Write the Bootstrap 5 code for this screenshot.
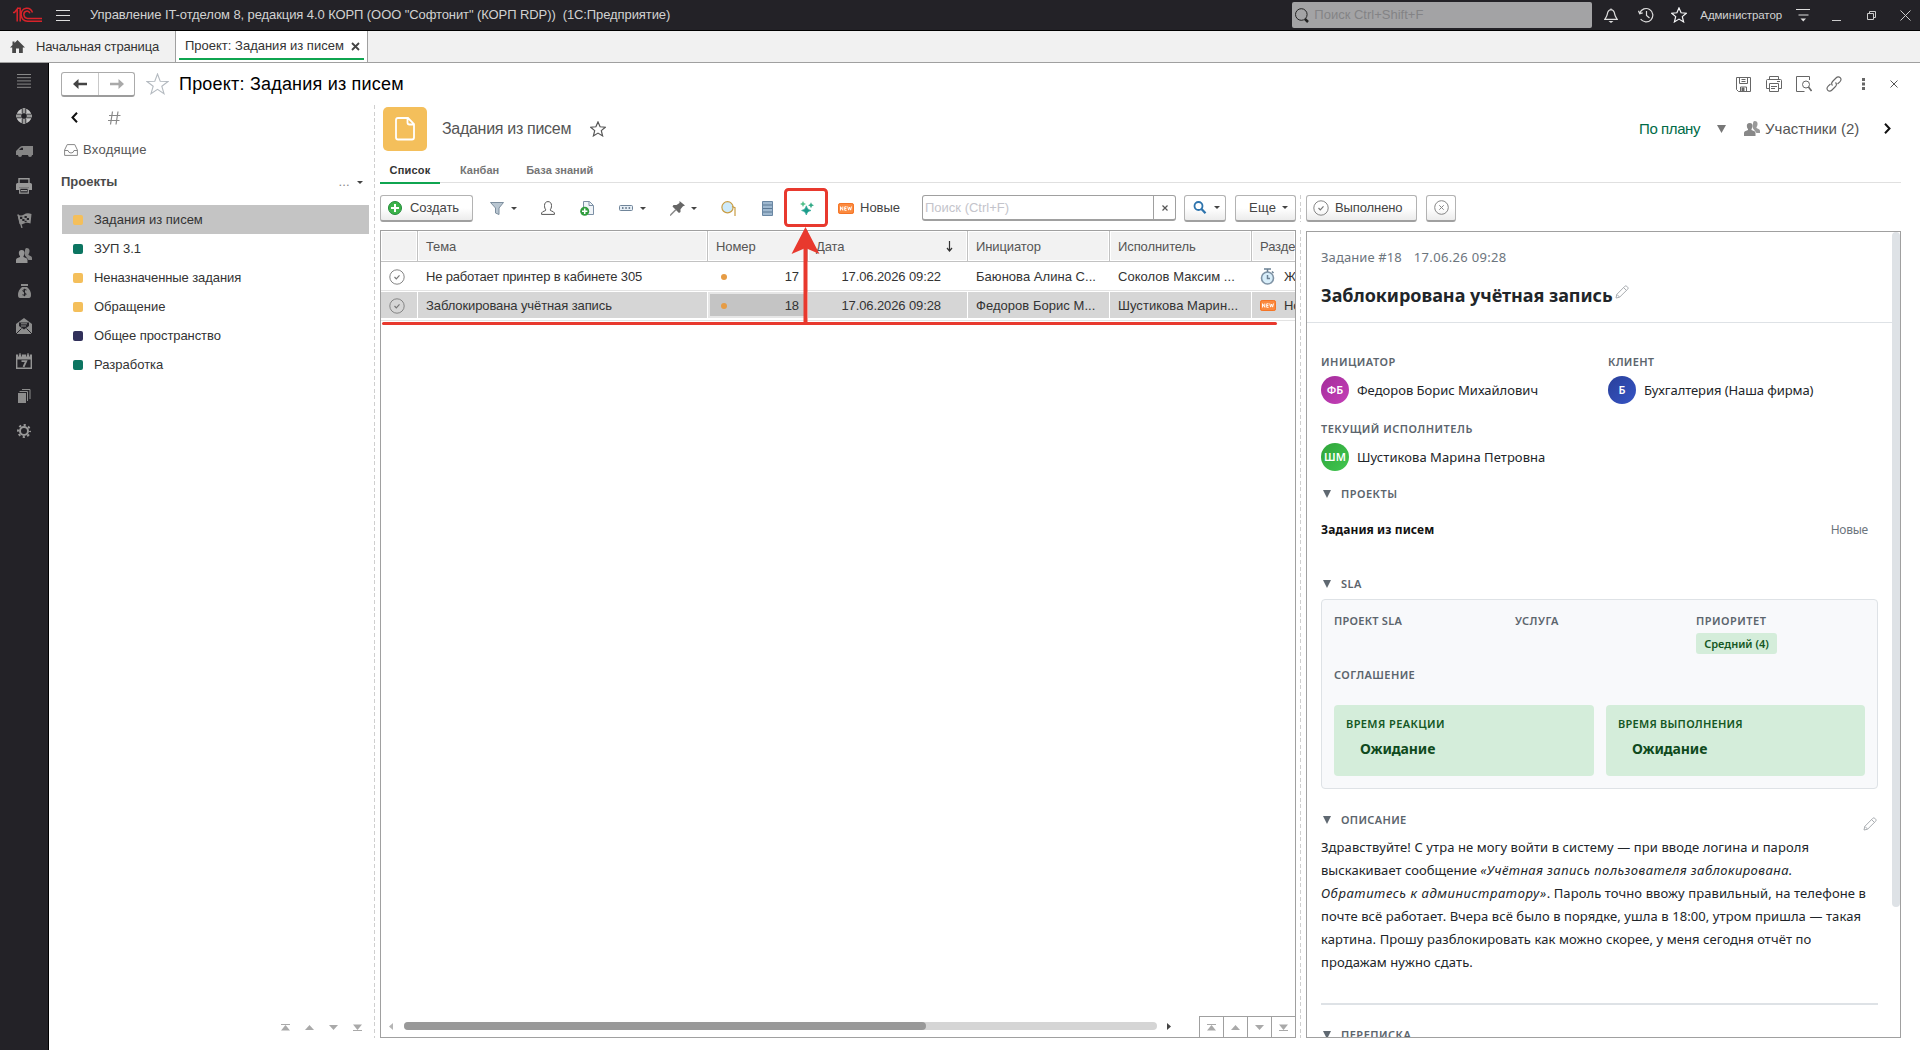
<!DOCTYPE html>
<html lang="ru">
<head>
<meta charset="utf-8">
<title>Проект: Задания из писем</title>
<link href="https://cdn.jsdelivr.net/npm/bootstrap@5.3.0/dist/css/bootstrap.min.css" rel="stylesheet">
<style>
*{box-sizing:border-box}
body{font-family:"Liberation Sans",Arial,sans-serif;font-size:13px;line-height:16px;color:#333;background:#fff;width:1920px;height:1050px;overflow:hidden;white-space:nowrap}
svg{display:block;flex:none}
.topbar{height:31px;background:#232227;border-bottom:1px solid #000;color:#d2d2d2;padding-left:12px}
.apptitle{margin-left:19px;letter-spacing:-.09px;white-space:pre}
.gsearch{width:300px;height:26px;background:#a3a3a5;border-radius:2px;color:#838386;padding-left:3px}
.tabsbar{height:32px;background:#f1f1f1;border-bottom:1px solid #a0a0a0}
.hometab{width:175px;padding-left:10px;letter-spacing:-.15px}
.wintab{width:193px;border:solid #a0a0a0;border-width:0 1px;background:#fff;padding:0 3px;height:31px}
.wintab>div{border-bottom:2px solid #0fa550;height:29px;padding:3px 4px 0 6px}
.side{width:49px;background:#232227;border-right:1px solid #000;color:#949494}
.side>div{height:35px}
.titlerow{height:42px;padding-left:12px}
.navgrp{width:74px;height:25px;border:1px solid #ababab;border-bottom:2px solid #9c9c9c;border-radius:3px}
.navgrp>div{width:36px}
.navgrp>div+div{border-left:1px solid #c9c9c9}
.wtitle{font-size:18px;letter-spacing:.2px;color:#000;margin-left:10px}
.tree{width:325px;padding-left:12px}
.trow{height:29px;width:307px;padding-left:11px;margin-left:1px}
.trow i{width:10px;height:10px;border-radius:2px;margin-right:11px}
.vdash{width:1px;background:repeating-linear-gradient(#cfcfcf 0 4px,transparent 4px 6.6px)}
.prjico{width:44px;height:44px;border-radius:5px;background:#f4bf5b}
.vtabs{height:26px;border-bottom:1px solid #e0e0e0;font-weight:bold;font-size:11px;color:#757575;width:1521px}
.vtabs>div{height:26px;padding-top:4px}
.vtabs .on{width:60px;border-bottom:2px solid #0fa550;color:#333;margin-right:20px}
.btn1{height:27px;border:1px solid #b3b3b3;border-bottom:2px solid #a0a0a0;border-radius:3px;background:linear-gradient(#fff 50%,#ececec);color:#444}
.caret{width:0;height:0;border:solid transparent;border-width:3px 3px 0;border-top-color:#444}
.sbox{width:254px;height:26px;border:1px solid #a0a0a0;border-bottom-width:2px;border-radius:3px;color:#c4c4cb}
.sbox>div+div{border-left:1px solid #a0a0a0;width:22px;height:23px;color:#555}
.grid1{width:916px;height:808px;border:1px solid #a0a0a0}
.gr{display:grid;grid-template-columns:37px 290px 100px 160px 142px 142px 1fr;height:29px;border-bottom:1px solid #e3e3e3;letter-spacing:-.1px;align-items:stretch}
.gr>div{display:flex;align-items:center;padding:1px 0 0 8px;border-right:1px solid transparent;overflow:hidden}
.gr.hd{height:31px;border-bottom:1px solid #c2c2c2;color:#555}
.gr.hd>div{border-right-color:#c2c2c2;background:#f2f2f2;box-shadow:inset 0 0 0 1px #fff}
.gr>div:last-child{border-right:0}
.gr.sel{height:30px;padding:1px 0 2px}
.gr.sel>div{background:#d6d6d6;border-right-color:#fff}
.gr>.cur1{background:#c4c4c4!important;box-shadow:inset 0 0 0 2px #e6e6e6}
.gr>.pers{letter-spacing:.04px}
.dot1{width:6px;height:6px;border-radius:50%;background:#e69c45;margin-left:5px}
.hthumb{background:#d5d5d5;width:753px;height:8px;border-radius:4px}
.hthumb:before{content:"";display:block;width:522px;height:8px;border-radius:4px;background:#999}
.scell{width:24px;height:21px;border:solid #a0a0a0;border-width:1px 0 0 1px}
.pane{width:595px;height:807px;border:1px solid #a0a0a0;font-family:"Noto Sans",sans-serif;color:#212529;overflow:hidden}
.pbody{width:585px}
.vthumb{width:8px;height:675px;background:#dee2e6;border-radius:4px}
.meta1{color:#6c757d;padding:17px 0 0 14px;height:38px;letter-spacing:.1px}
.h1x{font-weight:bold;font-size:18px;letter-spacing:-.04px;line-height:24px}
.lbl{font-weight:600;font-size:11px;color:#5c656d;letter-spacing:.48px;line-height:16px}
.ava{width:28px;height:28px;border-radius:50%;color:#fff;font-weight:600;font-size:11px;margin-right:8px}
.tri{width:0;height:0;border:solid transparent;border-width:8px 4.5px 0;border-top-color:#5f6871;margin:0 10px 0 2px}
.slabox{height:190px;width:557px;border:1px solid #dee2e6;border-radius:4px;background:#f8f9fb;padding:13px 12px 0}
.pri{background:#d4edda;color:#155724;font-weight:600;font-size:11px;border-radius:3px;height:21px;width:81px}
.gbox{background:#d4edda;color:#0f4a1d;border-radius:4px;height:71px;padding:11px 12px 0}
.gbox .lbl{color:#155724}
.gbox b{font-size:14px;margin:8px 0 0 14px;line-height:18px;letter-spacing:-.14px}
.desc1{line-height:23px;height:138px;letter-spacing:.09px}
.redlayer{left:380px;top:186px;z-index:5;pointer-events:none}
</style>
<script src="https://cdn.jsdelivr.net/npm/bootstrap@5.3.0/dist/js/bootstrap.bundle.min.js"></script>
</head>
<body>
<svg width="0" height="0" class="position-absolute">
<defs>
<symbol id="chk" viewBox="0 0 16 16"><circle cx="8" cy="8" r="7.2" fill="none" stroke="#858585"/><path d="M5.500 8l1.800 1.800 3.200-3.400" fill="none" stroke="#777" stroke-width="1.200"/></symbol>
<symbol id="star" viewBox="0 0 16 16"><path d="M8 .9l2.100 4.900 5.200.4-4 3.400 1.300 5.300L8 12.100l-4.600 2.800 1.300-5.300-4-3.400 5.200-.4z" fill="none" stroke="currentColor" stroke-width="1.200"/></symbol>
<symbol id="newb" viewBox="0 0 16 11"><rect width="16" height="11" rx="2.500" fill="#fb8a3f"/><rect x=".5" y=".5" width="15" height="10" rx="2" fill="none" stroke="#f47426"/><path d="M2.500 7.500V3.700l2.300 3.600V3.500M8.600 3.800H6.700v3.500h1.900M6.700 5.500h1.700M9.700 3.500l.9 3.600 1-3 1 3 .9-3.600" fill="none" stroke="#fff" stroke-width=".95"/></symbol>
<symbol id="pen" viewBox="0 0 14 14"><path d="M1 13l.8-3.600L9.800 1.300q1-1 2 0l.9.9q1 1 0 2L4.600 12.200zM8.600 2.600l2.900 2.900M2 9.500l2.500 2.500" fill="none" stroke="#a9adb1"/></symbol>
<symbol id="up" viewBox="0 0 9 7"><path d="M4.500 1L9 6H0z" fill="#a9a9a9"/></symbol>
<symbol id="dn" viewBox="0 0 9 7"><path d="M4.500 6L0 1h9z" fill="#a9a9a9"/></symbol>
<symbol id="top" viewBox="0 0 9 7"><path d="M4.500 1L9 6.500H0zM0 0h9v1H0z" fill="#a9a9a9"/></symbol>
<symbol id="bot" viewBox="0 0 9 7"><path d="M4.500 6L0 .5h9zM0 6h9v1H0z" fill="#a9a9a9"/></symbol>
<symbol id="folk" viewBox="0 0 16 15"><path d="M10.500 0C13 0 13.800 1.500 13.500 3.500c-.2 1.500-.7 2.200-1 2.600v1L15 8.300q1 .5 1 1.700v2h-3.500L9 7.500V2q.3-1.800 1.500-2z" fill="currentColor" opacity=".85"/><path d="M5.700 2c2.300 0 3.200 1.500 2.900 3.500-.2 1.300-.6 1.900-1.100 2.400v1.200l3 1.200q1 .5 1 1.700v3H0v-3q0-1.200 1-1.700l3-1.200V7.900C3.400 7.400 3 6.800 2.900 5.500 2.600 3.500 3.500 2 5.700 2z" fill="currentColor"/></symbol>
</defs>
</svg>

<header class="topbar d-flex align-items-center">
<svg width="31" height="16" viewBox="0 0 31 16" fill="none" stroke="#d8232a" stroke-width="1.500"><path d="M1 5.500h1.500L5.200 2v12.500M8.200 14.500V1.200H5.500"/><path d="M20.500 5.500C19.500 2.500 17 .9 14.300 1.200 11 1.500 8.700 4.500 9.200 8.200c.4 3.600 3 6 6.300 6H30M18 6.200c-.7-1.500-2.200-2.400-3.700-2C12.400 4.700 11.600 6.500 12 8.400c.4 2 1.800 3 3.500 3H30" /></svg>
<svg style="margin-left:13px" width="15" height="13" viewBox="0 0 15 13"><path d="M0 1.500h14M0 6.500h14M0 11.500h14" stroke="#ddd" fill="none"/></svg>
<span class="apptitle">Управление IT-отделом 8, редакция 4.0 КОРП (ООО "Софтонит" (КОРП RDP))  (1С:Предприятие)</span>
<div class="gsearch d-flex align-items-center ms-auto">
<svg width="15" height="17" viewBox="0 0 15 17" fill="none" stroke="#222"><circle cx="6.300" cy="7.500" r="5.800"/><path d="M10 12l3 3" stroke-width="2.500"/></svg>
<span style="margin-left:4px">Поиск Ctrl+Shift+F</span></div>
<svg style="margin-left:12px" width="14" height="16" viewBox="0 0 14 16"><path d="M7 1.500v1.200C4 3 3.600 5 3.300 7.200 3 9.500 2 10.500.8 12.300h12.400C12 10.500 11 9.500 10.700 7.200 10.400 5 10 3 7 2.700" fill="none" stroke="#ddd" stroke-width="1.200"/><path d="M4.500 14h5L7 16z" fill="#ddd"/></svg>
<svg style="margin-left:20px" width="16" height="16" viewBox="0 0 16 16" fill="none" stroke="#ddd" stroke-width="1.200"><path d="M1.800 6A6.700 6.700 0 1 1 2.600 12M.5 3.800l1.200 2.900 3-.8M8.500 4v4.500l3 2.500"/></svg>
<svg class="text-light" style="margin-left:17px" width="16" height="16"><use href="#star"/></svg>
<span style="margin:0 14px 0 13px;font-size:11.500px;letter-spacing:-.1px">Администратор</span>
<svg width="15" height="14" viewBox="0 0 15 14"><path d="M0 1.500h14M2.500 7h10" stroke="#ddd"/><path d="M4.500 10.500h5.500L7.300 13.500z" fill="#ddd"/></svg>
<svg style="margin-left:21px" width="10" height="14"><path d="M0 12.500h9" stroke="#ccc"/></svg>
<svg style="margin-left:25px" width="11" height="11" viewBox="0 0 11 11" fill="none" stroke="#ccc"><path d="M.5 3.500h6v6h-6zM2.500 3V1.500h6v6H7"/></svg>
<svg style="margin:0 9px 0 22px" width="11" height="11" viewBox="0 0 11 11"><path d="M.5.5l10 10M10.500.5l-10 10" stroke="#ccc"/></svg>
</header>

<nav class="tabsbar d-flex">
<div class="hometab d-flex align-items-center"><svg width="15" height="13" viewBox="0 0 15 13"><path d="M7.500 0L15 7.500h-2.200V13H9V8.500H6V13H2.200V7.500H0L2.500 5V1.500h2v1.600z" fill="#484848"/></svg><span style="margin-left:11px">Начальная страница</span></div>
<div class="wintab"><div class="d-flex align-items-center justify-content-between">Проект: Задания из писем<svg width="9" height="9" viewBox="0 0 9 9"><path d="M1 1l7 7M8 1L1 8" stroke="#444" stroke-width="1.800"/></svg></div></div>
</nav>

<div class="d-flex" style="height:987px">
<aside class="side d-flex flex-column">
<div class="d-flex align-items-center justify-content-center"><svg width="14" height="14"><path d="M0 .5h14M0 3.700h14M0 6.900h14M0 10.100h14M0 13.300h14" stroke="#888"/></svg></div>
<div class="d-flex align-items-center justify-content-center"><svg width="16" height="16" viewBox="0 0 16 16"><circle cx="8" cy="8" r="5.300" fill="none" stroke="#c4c4c4" stroke-width="4.600"/><path d="M8 0v5.200M8 10.800V16M0 8h5.200M10.800 8H16" stroke="#232227" stroke-width="4.500"/><path d="M8 0v5.200M8 10.800V16M0 8h5.200M10.800 8H16" stroke="#999" stroke-width="2.800"/></svg></div>
<div class="d-flex align-items-center justify-content-center"><svg width="17" height="12" viewBox="0 0 17 12"><path d="M0 10V6l4-4q1-1 2.500-1H17v9h-1a2 2 0 0 1-4 0H6a2 2 0 0 1-4 0z" fill="#858585"/><path d="M3 5l2.300-2.300H7V5z" fill="#232227"/></svg></div>
<div class="d-flex align-items-center justify-content-center"><svg width="16" height="16" viewBox="0 0 16 16"><path d="M3 5V.7h10V5" fill="none" stroke="#999" stroke-width="1.400"/><path d="M1.500 5h13Q16 5 16 6.500V12h-3V9.500H3V12H0V6.500Q0 5 1.500 5z" fill="#999"/><path d="M3.700 10.200h8.600v5H3.700zM5 12.700h6" fill="none" stroke="#999" stroke-width="1.300"/></svg></div>
<div class="d-flex align-items-center justify-content-center"><svg width="15" height="15" viewBox="0 0 15 15"><path d="M.5 1.500Q4 3.500 7 1.500T14.500 1l-1 9.500Q10 9 7 10.500T2.500 11z" fill="#8c8c8c"/><path d="M1 1.500l4 13.500" stroke="#8c8c8c" stroke-width="1.300"/><path d="M3 3.800h2.300V6H3zM7.500 3h2.300v2H7.500zM5.300 6h2.200v2H5.300zM9.800 5h2.200v2H9.800zM7.600 7.700h2v1.600h-2z" fill="#232227"/></svg></div>
<div class="d-flex align-items-center justify-content-center"><svg width="16" height="15"><use href="#folk"/></svg></div>
<div class="d-flex align-items-center justify-content-center"><svg width="13" height="14" viewBox="0 0 13 14"><path d="M3 0h7v2H3zM4 3h5q4 3 4 8 0 3-2 3H2q-2 0-2-3 0-5 4-8z" fill="#8c8c8c"/><path d="M8.500 6q-2-1-3.300 0T6.500 8.500t1.300 2.300-3.300 0M6.500 4.800v7.400" fill="none" stroke="#232227"/></svg></div>
<div class="d-flex align-items-center justify-content-center"><svg width="16" height="16" viewBox="0 0 16 16"><path d="M0 6l8-6 8 6v10H0z" fill="#8c8c8c"/><path d="M3 4.500h10V8l-5 3.500L3 8z" fill="#232227"/><path d="M0 16l5.500-5.500M16 16l-5.500-5.500" stroke="#232227"/><path d="M5 5.800h6M5 8h5" stroke="#8c8c8c"/></svg></div>
<div class="d-flex align-items-center justify-content-center"><svg width="16" height="16" viewBox="0 0 16 16"><path d="M.7 3h14.600v12.300H.7z" fill="none" stroke="#949494" stroke-width="1.400"/><path d="M0 2h16v4H0zM4 0v4M12 0v4" fill="#949494" stroke="#949494"/><path d="M2.500 0v3.500M5.500 0v3.500M10.500 0v3.500M13.500 0v3.500" stroke="#232227" stroke-width=".8"/><path d="M5.500 8.200h4.700L7.500 14" fill="none" stroke="#949494" stroke-width="1.800"/></svg></div>
<div class="d-flex align-items-center justify-content-center"><svg width="13" height="14" viewBox="0 0 13 14"><path d="M0 4h8v10H0z" fill="#8c8c8c"/><path d="M1.500 2.500h8V12M4 .5h8v9.500" fill="none" stroke="#8c8c8c"/></svg></div>
<div class="d-flex align-items-center justify-content-center"><svg width="14" height="14" viewBox="0 0 14 14"><circle cx="7" cy="7" r="4" fill="none" stroke="#999" stroke-width="2"/><circle cx="7" cy="7" r="6" fill="none" stroke="#999" stroke-width="2" stroke-dasharray="2.200 2.512" stroke-dashoffset="1.100"/></svg></div>
</aside>

<main class="flex-grow-1">
<div class="titlerow d-flex align-items-center">
<div class="navgrp d-flex">
<div class="d-flex align-items-center justify-content-center"><svg width="14" height="10" viewBox="0 0 14 10"><path d="M0 5L5.500 0v3.700H14v2.600H5.500V10z" fill="#444"/></svg></div>
<div class="d-flex align-items-center justify-content-center"><svg width="14" height="10" viewBox="0 0 14 10"><path d="M14 5L8.500 0v3.700H0v2.600h8.500V10z" fill="#a9a9a9"/></svg></div></div>
<svg style="margin-left:11px;color:#b4bac0" width="23" height="22" viewBox="0 0 23 22"><path d="M11.500 1l2.700 7.300 7.800.2-6.200 4.700 2.200 7.500-6.500-4.400L5 20.700l2.200-7.500L1 8.500l7.800-.2z" fill="none" stroke="currentColor" stroke-width="1.100"/></svg>
<span class="wtitle">Проект: Задания из писем</span>
<div class="d-flex align-items-center ms-auto" style="margin-right:22px">
<svg width="15" height="15" viewBox="0 0 15 15" fill="none" stroke="#666"><path d="M.5.5h14v14h-12l-2-2zM3.500.5v6h8v-6M5.500 2.500h4M5.500 4.500h4M4.500 14v-4h6v4"/><path d="M6 11h2v3H6z" fill="#666"/></svg>
<svg style="margin-left:15px" width="16" height="16" viewBox="0 0 16 16" fill="none" stroke="#666"><path d="M3.500 3.500v-3h9v3M3 12.500H.5v-8q0-1 1-1h13q1 0 1 1v8H13M3.500 7.500h9v8h-9zM5 10.500h6M5 12.500h4M11 5.500h3"/></svg>
<svg style="margin-left:14px" width="16" height="16" viewBox="0 0 16 16" fill="none" stroke="#666"><path d="M13.500 4V.5H.5v15h8"/><circle cx="10" cy="8.500" r="3.500"/><path d="M12.500 11l3 4" stroke-width="1.600"/></svg>
<svg style="margin-left:14px" width="16" height="16" viewBox="0 0 16 16" fill="none" stroke="#666" stroke-width="1.100"><path d="M6.500 9.500C5 8 5.500 6.500 7 5l3-3c1.500-1.500 3-1.500 4.200-.3s1 2.700-.4 4.200L11.500 8M9.500 6.500C11 8 10.500 9.500 9 11l-3 3c-1.500 1.500-3 1.500-4.200.3s-1-2.700.4-4.200L4.500 8"/></svg>
<svg style="margin-left:20px" width="3" height="12"><path d="M0 0h3v3H0zM0 4.500h3v3H0zM0 9h3v3H0z" fill="#666"/></svg>
<svg style="margin-left:25px" width="8" height="8" viewBox="0 0 8 8"><path d="M.5.500l7 7M7.500.500l-7 7" stroke="#555"/></svg>
</div></div>

<div class="d-flex" style="height:933px">
<section class="tree d-flex flex-column">
<div class="d-flex align-items-center" style="height:25px;padding-left:10px"><svg width="7" height="11" viewBox="0 0 7 11"><path d="M6 .8L1.500 5.500 6 10.200" fill="none" stroke="#111" stroke-width="2"/></svg><svg style="margin-left:30px" width="13" height="14" viewBox="0 0 13 14"><path d="M4.500.5L2.500 13.500M10 .5L8 13.500M1 4.500h11.500M0 9.500h11.500" stroke="#888" stroke-width="1.200" fill="none"/></svg></div>
<div class="d-flex align-items-center" style="height:40px;padding-left:3px;letter-spacing:.27px;color:#555"><svg width="14" height="12" viewBox="0 0 14 12"><path d="M.6 6L3.200.6h7.600L13.400 6v5.400H.6zM.6 6.500H4q.5 2.500 3 2.500t3-2.500h3.400" fill="none" stroke="#888"/></svg><span style="margin-left:5px">Входящие</span></div>
<div class="d-flex align-items-center" style="height:24px;color:#4a4a4a"><b>Проекты</b><span style="margin-left:221px;color:#888;letter-spacing:.2px">...</span><i class="caret" style="margin-left:7px"></i></div>
<div style="height:11px"></div>
<div class="trow d-flex align-items-center" style="background:#c4c4c4"><i style="background:#f4bf5b"></i>Задания из писем</div>
<div class="trow d-flex align-items-center"><i style="background:#0c7561"></i>ЗУП 3.1</div>
<div class="trow d-flex align-items-center"><i style="background:#f4bf5b"></i><span style="letter-spacing:-.09px">Неназначенные задания</span></div>
<div class="trow d-flex align-items-center"><i style="background:#f4bf5b"></i>Обращение</div>
<div class="trow d-flex align-items-center"><i style="background:#31305a"></i><span style="letter-spacing:-.08px">Общее пространство</span></div>
<div class="trow d-flex align-items-center"><i style="background:#0c7561"></i>Разработка</div>
<div class="d-flex mt-auto" style="gap:15px;padding:0 0 7px 220px"><svg width="9" height="7"><use href="#top"/></svg><svg width="9" height="7"><use href="#up"/></svg><svg width="9" height="7"><use href="#dn"/></svg><svg width="9" height="7"><use href="#bot"/></svg></div>
</section>
<div class="vdash"></div>

<section style="padding-left:5px">
<div class="d-flex align-items-center" style="height:47px;padding-left:3px;color:#555">
<div class="prjico d-flex align-items-center justify-content-center"><svg width="20" height="24" viewBox="0 0 20 24" fill="none" stroke="#fff" stroke-width="1.800"><path d="M3.500 1h9.500l6 6v13.500q0 2-2 2H3q-2 0-2-2V3q0-2 2-2zM12.500 1.500V5.500q0 2 2 2h4"/></svg></div>
<span style="font-size:16px;letter-spacing:-.3px;margin-left:15px">Задания из писем</span>
<svg style="margin-left:19px" width="16" height="16"><use href="#star"/></svg>
<div class="d-flex align-items-center ms-auto" style="font-size:15px;width:262px">
<span style="color:#006b47;letter-spacing:-.4px">По плану</span>
<svg style="margin-left:17px" width="9" height="8"><path d="M0 0h9L4.500 8z" fill="#777"/></svg>
<svg style="margin-left:18px;color:#888" width="16" height="15"><use href="#folk"/></svg>
<span style="margin-left:5px">Участники (2)</span>
<svg style="margin-left:25px" width="7" height="11" viewBox="0 0 7 11"><path d="M1 .8l4.500 4.700L1 10.200" fill="none" stroke="#111" stroke-width="2"/></svg></div></div>
<div style="height:6px"></div>
<div class="vtabs d-flex" style="height:25px"><div class="on text-center" style="letter-spacing:.2px">Список</div><div style="margin-right:27px">Канбан</div><div>База знаний</div></div>

<div class="d-flex align-items-center" style="height:47px;padding-top:3px">
<div class="btn1 d-flex align-items-center" style="width:93px;padding-left:7px"><svg width="14" height="14" viewBox="0 0 14 14"><circle cx="7" cy="7" r="6.500" fill="#3cb34a" stroke="#23893a"/><path d="M7 3v8M3 7h8" stroke="#fff" stroke-width="2"/></svg><span style="margin-left:8px;letter-spacing:-.06px">Создать</span></div>
<svg style="margin-left:17px" width="14" height="13" viewBox="0 0 14 13"><path d="M.5.500h13L9 6v6.500l-3.500-1.500V6z" fill="#b9c6d1" stroke="#7d8e9e"/></svg><i class="caret" style="margin-left:7px"></i>
<svg style="margin-left:24px" width="14" height="14" viewBox="0 0 14 14"><path d="M.6 13.400v-1.500C1.500 10 5 10 5 9 4 8 3.500 6.500 3.500 4.500 3.500 2 5 .6 7 .6s3.500 1.400 3.500 3.900C10.500 6.500 10 8 9 9c0 1 3.500 1 4.400 2.900v1.500z" fill="none" stroke="#555"/></svg>
<svg style="margin-left:25px" width="14" height="15" viewBox="0 0 14 15"><path d="M3.500 8V.5h6l4 4v9H8" fill="#f0f4f8" stroke="#7c90a5"/><path d="M9 .5v4h4" fill="none" stroke="#7c90a5"/><circle cx="4.700" cy="10.200" r="4.500" fill="#2f9c3d"/><path d="M4.700 7.500V13M2 10.200h5.400" stroke="#fff" stroke-width="1.500"/></svg>
<svg style="margin-left:25px" width="14" height="6" viewBox="0 0 14 6"><rect x=".5" y=".5" width="13" height="5" rx="1" fill="#e6eef5" stroke="#70859a"/><path d="M3 3h1.500M6.300 3h1.500M9.600 3h1.500" stroke="#4c6075" stroke-width="1.500"/></svg><i class="caret" style="margin-left:7px"></i>
<svg style="margin-left:24px" width="15" height="15" viewBox="0 0 15 15"><path d="M9.500 0L15 4.500l-2 .8-2.500 3V11L9 12 2.500 5.500 3.500 4h3L9.500 2z" fill="#666"/><path d="M6 8.500L0 14.500" stroke="#888" stroke-width="1.500"/></svg><i class="caret" style="margin-left:6px"></i>
<svg style="margin-left:24px" width="16" height="15" viewBox="0 0 16 15"><circle cx="6.500" cy="6.300" r="5.600" fill="#cdeafa" stroke="#c99d44" stroke-width="1.200"/><path d="M11 5.500l3 1.200V15" fill="none" stroke="#c99d44" stroke-width="1.200"/></svg>
<svg style="margin-left:25px" width="11" height="15" viewBox="0 0 11 15"><path d="M.5.500h10v14H.5z" fill="#9fb8cf" stroke="#6a87a3"/><path d="M1 4h9M1 7.500h9M1 11h9" stroke="#5b7894"/></svg>
<svg style="margin-left:27px" width="14" height="14" viewBox="0 0 14 14"><path d="M6.300 4.800Q6.900 8.800 11 9.500 6.900 10 6.300 14 5.700 10 1.600 9.500 5.700 8.800 6.300 4.800z" fill="#1a9c8a" stroke="#1a9c8a" stroke-width=".6"/><path d="M3 0q.4 2.400 3 3-2.600.4-3 3-.4-2.600-3-3 2.600-.6 3-3z" fill="#52c18b"/><path d="M11 1.300q.4 2.400 3 3-2.600.4-3 3-.4-2.600-3-3 2.600-.6 3-3z" fill="#35ab88"/></svg>
<svg style="margin-left:24px" width="16" height="11"><use href="#newb"/></svg><span style="margin-left:6px;width:62px;color:#444">Новые</span>
<div class="sbox d-flex align-items-center"><div class="flex-grow-1" style="padding-left:2px">Поиск (Ctrl+F)</div><div class="d-flex align-items-center justify-content-center"><svg width="6" height="6"><path d="M.5.500l5 5M5.500.500l-5 5" stroke="#555" stroke-width="1.200"/></svg></div></div>
<div class="btn1 d-flex align-items-center" style="width:42px;margin-left:8px;padding-left:8px"><svg width="14" height="13" viewBox="0 0 14 13"><circle cx="5.500" cy="5" r="4" fill="none" stroke="#2e74ad" stroke-width="1.800"/><path d="M8.500 8l4 4.200" stroke="#2e74ad" stroke-width="2.300"/></svg><i class="caret" style="margin-left:7px"></i></div>
<div class="btn1 d-flex align-items-center" style="width:61px;margin-left:9px;padding-left:13px;letter-spacing:.3px">Еще<i class="caret" style="margin-left:6px"></i></div>
<div class="vdash" style="height:27px;margin-left:4px"></div>
<div class="btn1 d-flex align-items-center" style="width:111px;margin-left:5px;padding-left:6px;letter-spacing:-.1px"><svg width="16" height="16"><use href="#chk"/></svg><span style="margin-left:6px">Выполнено</span></div>
<div class="btn1 d-flex align-items-center justify-content-center" style="width:30px;margin-left:9px"><svg width="15" height="15" viewBox="0 0 15 15" fill="none" stroke="#858585"><circle cx="7.500" cy="7.500" r="6.800"/><path d="M5.300 5.300l4.400 4.400M9.700 5.300L5.300 9.700"/></svg></div>
</div>

<div class="d-flex">
<div class="grid1 d-flex flex-column">
<div class="gr hd"><div></div><div>Тема</div><div>Номер</div><div class="justify-content-between" style="padding-right:14px">Дата<svg width="7" height="11" viewBox="0 0 7 11"><path d="M3.500 0v9.500M1 7l2.500 3L6 7" stroke="#333" fill="none" stroke-width="1.200"/></svg></div><div>Инициатор</div><div>Исполнитель</div><div>Разде</div></div>
<div class="gr"><div><svg width="16" height="16"><use href="#chk"/></svg></div><div style="letter-spacing:-.17px">Не работает принтер в кабинете 305</div><div><i class="dot1"></i><span class="ms-auto" style="padding-right:8px">17</span></div><div class="justify-content-end" style="padding-right:26px">17.06.2026 09:22</div><div class="pers">Баюнова Алина С...</div><div class="pers">Соколов Максим ...</div><div><svg width="15" height="17" viewBox="0 0 15 17"><circle cx="7.500" cy="10" r="6" fill="#d8eefa" stroke="#7f93a5" stroke-width="1.600"/><path d="M4 1h7M7.500 1v3M12 3.500l1.500 1.500M7.500 7v3.500h2.500" stroke="#6b8194" stroke-width="1.500" fill="none"/></svg><span style="margin-left:9px">Жд</span></div></div>
<div class="gr sel"><div><svg width="16" height="16"><use href="#chk"/></svg></div><div>Заблокирована учётная запись</div><div class="cur1"><i class="dot1"></i><span class="ms-auto" style="padding-right:8px">18</span></div><div class="justify-content-end" style="padding-right:26px">17.06.2026 09:28</div><div class="pers">Федоров Борис М...</div><div class="pers">Шустикова Марин...</div><div><svg width="16" height="11"><use href="#newb"/></svg><span style="margin-left:8px">Но</span></div></div>
<div class="d-flex align-items-end mt-auto">
<div class="d-flex align-items-center" style="padding:0 0 7px 8px;width:818px"><svg width="5" height="7"><path d="M4 0v7L0 3.500z" fill="#b5b5b5"/></svg><div class="hthumb" style="margin-left:10px"></div><svg style="margin-left:10px" width="5" height="7"><path d="M0 0v7l4-3.500z" fill="#444"/></svg></div>
<div class="scell d-flex align-items-center justify-content-center"><svg width="9" height="7"><use href="#top"/></svg></div><div class="scell d-flex align-items-center justify-content-center"><svg width="9" height="7"><use href="#up"/></svg></div><div class="scell d-flex align-items-center justify-content-center"><svg width="9" height="7"><use href="#dn"/></svg></div><div class="scell d-flex align-items-center justify-content-center"><svg width="9" height="7"><use href="#bot"/></svg></div>
</div></div>
<div class="vdash" style="margin-left:4px;height:808px"></div>

<div class="pane d-flex" style="margin:1px 0 0 5px"><div class="pbody">
<div class="meta1">Задание #18<span style="margin-left:12px;letter-spacing:.33px">17.06.26 09:28</span></div>
<div class="d-flex border-bottom" style="height:53px;padding:13px 0 0 14px"><span class="h1x">Заблокирована учётная запись</span><svg style="margin:2px 0 0 2px" width="14" height="14"><use href="#pen"/></svg></div>
<div style="padding:31px 0 0 14px;width:571px">
<div class="d-flex"><div style="width:287px"><div class="lbl">ИНИЦИАТОР</div><div class="d-flex align-items-center" style="margin-top:6px"><div class="ava d-flex align-items-center justify-content-center" style="background:linear-gradient(135deg,#a32c9a,#c540b8)">ФБ</div>Федоров Борис Михайлович</div></div>
<div><div class="lbl" style="letter-spacing:.3px">КЛИЕНТ</div><div class="d-flex align-items-center" style="margin-top:6px;letter-spacing:-.08px"><div class="ava d-flex align-items-center justify-content-center" style="background:linear-gradient(135deg,#29409a,#3654c4)">Б</div>Бухгалтерия (Наша фирма)</div></div></div>
<div class="lbl" style="margin-top:17px">ТЕКУЩИЙ ИСПОЛНИТЕЛЬ</div>
<div class="d-flex align-items-center" style="margin-top:6px;letter-spacing:.06px"><div class="ava d-flex align-items-center justify-content-center" style="background:linear-gradient(135deg,#2fa43a,#41c750)">ШМ</div>Шустикова Марина Петровна</div>
<div class="lbl d-flex align-items-center" style="margin-top:15px"><i class="tri"></i>ПРОЕКТЫ</div>
<div class="d-flex justify-content-between align-items-center" style="margin-top:20px;padding-right:10px"><b style="font-size:12px;letter-spacing:.09px;color:#111">Задания из писем</b><span style="font-size:12px;color:#6c757d;letter-spacing:-.25px">Новые</span></div>
<div class="lbl d-flex align-items-center" style="margin-top:38px"><i class="tri"></i>SLA</div>
<div class="slabox" style="margin-top:7px">
<div class="d-flex" style="height:54px"><div style="width:181px;letter-spacing:.25px" class="lbl">ПРОЕКТ SLA</div><div style="width:181px" class="lbl">УСЛУГА</div><div><div class="lbl">ПРИОРИТЕТ</div><div class="pri d-flex align-items-center justify-content-center" style="margin-top:4px">Средний (4)</div></div></div>
<div class="lbl" style="height:38px;letter-spacing:.4px">СОГЛАШЕНИЕ</div>
<div class="d-flex" style="gap:12px"><div class="gbox" style="width:260px"><div class="lbl" style="letter-spacing:.4px">ВРЕМЯ РЕАКЦИИ</div><b class="d-block">Ожидание</b></div><div class="gbox" style="width:259px"><div class="lbl" style="letter-spacing:.25px">ВРЕМЯ ВЫПОЛНЕНИЯ</div><b class="d-block">Ожидание</b></div></div>
</div>
<div class="d-flex justify-content-between" style="margin-top:23px;height:24px;padding-right:1px"><div class="lbl d-flex align-items-center" style="height:16px;letter-spacing:.35px"><i class="tri"></i>ОПИСАНИЕ</div><svg style="margin-top:5px" width="14" height="14"><use href="#pen"/></svg></div>
<div class="desc1">Здравствуйте! С утра не могу войти в систему — при вводе логина и пароля<br><span style="letter-spacing:.04px">выскакивает сообщение </span><em style="letter-spacing:.45px">«Учётная запись пользователя заблокирована.</em><br><em style="letter-spacing:.57px">Обратитесь к администратору»</em>. Пароль точно ввожу правильный, на телефоне в<br>почте всё работает. Вчера всё было в порядке, ушла в 18:00, утром пришла — такая<br>картина. Прошу разблокировать как можно скорее, у меня сегодня отчёт по<br>продажам нужно сдать.</div>
<div style="height:2px;background:#dee2e6;width:557px;margin-top:29px"></div>
<div class="lbl d-flex align-items-center" style="margin-top:22px"><i class="tri"></i>ПЕРЕПИСКА</div>
</div></div><div class="vthumb"></div></div>
</div>
</section>
</div>
</main>
</div>

<svg class="position-absolute redlayer" width="900" height="145" viewBox="380 186 900 145" fill="none" stroke="#e8392e"><rect x="785.500" y="189.500" width="41" height="36" rx="3" stroke-width="3"/><path d="M383.500 323.500h892" stroke-width="3" stroke-linecap="round"/><path d="M805.500 322V245" stroke-width="4"/><path d="M805.500 227l14 27-14-6-14 6z" fill="#e8392e" stroke="none"/></svg>
</body>
</html>
